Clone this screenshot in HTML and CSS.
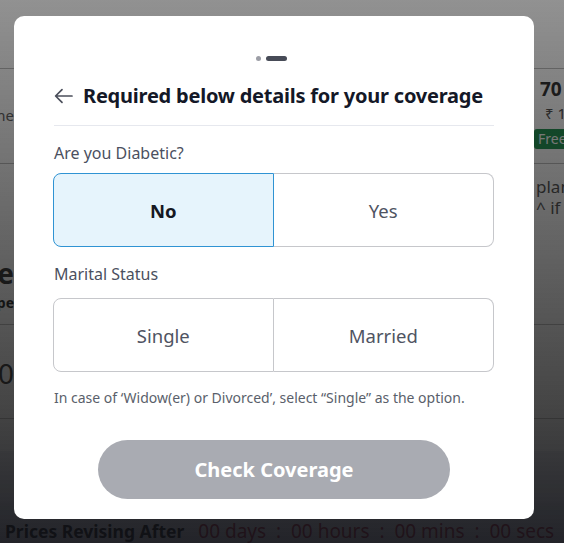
FILE: index.html
```html
<!DOCTYPE html>
<html lang="en">
<head>
<meta charset="utf-8">
<title>Required details</title>
<link rel="stylesheet" href="styles.css">
</head>
<body>
<div class="page">
  <div class="sec sec-top"></div>
  <div class="sec sec-a">
    <div class="lcol"><span class="bg-muted bg-me">Name</span></div>
    <div class="mcol"></div>
    <div class="rcol">
      <span class="bg-price">70</span>
      <span class="bg-rupee">₹ 1</span>
      <span class="bg-free">Free</span>
    </div>
  </div>
  <div class="sec sec-b">
    <div class="lcol lcol-stack">
      <span class="bg-big">Insure</span>
      <span class="bg-small">Type</span>
    </div>
    <div class="mcol"></div>
    <div class="rcol rcol-text">
      <span>plans</span>
      <span>^ if c</span>
    </div>
  </div>
  <div class="sec sec-c">
    <div class="lcol"><span class="bg-big">₹10</span></div>
  </div>
  <div class="sec sec-d"></div>
  <div class="sec sec-band"></div>
  <div class="sec sec-bottom">
    <span class="bg-timer-label">Prices Revising After</span>
    <span class="bg-timer">00 days&nbsp; : &nbsp;00 hours&nbsp; : &nbsp;00 mins&nbsp; : &nbsp;00 secs</span>
  </div>
</div>
<div class="overlay"></div>

<div class="modal">
  <div class="steps">
    <span class="step-dot"></span>
    <span class="step-pill"></span>
  </div>
  <div class="head">
    <svg class="back" width="19" height="16" viewBox="0 0 19 16" aria-hidden="true">
      <path d="M18 8H1.8M8 1.6L1.6 8 8 14.4" fill="none" stroke="#4b4f5b" stroke-width="1.7" stroke-linecap="round" stroke-linejoin="round"/>
    </svg>
    <h1 class="title">Required below details for your coverage</h1>
  </div>
  <div class="q q-first">Are you Diabetic?</div>
  <div class="seg seg-first">
    <button class="opt opt-on">No</button>
    <button class="opt">Yes</button>
  </div>
  <div class="q q-second">Marital Status</div>
  <div class="seg">
    <button class="opt">Single</button>
    <button class="opt">Married</button>
  </div>
  <p class="note">In case of ‘Widow(er) or Divorced’, select “Single” as the option.</p>
  <button class="cta">Check Coverage</button>
</div>
</body>
</html>
```

FILE: styles.css
```css
* { box-sizing: border-box; }
html, body { margin: 0; padding: 0; }
body {
  font-family: "Noto Sans", "Open Sans", sans-serif;
  background: #ffffff;
  width: 564px;
  height: 543px;
  overflow: hidden;
}

/* background page */
.page {
  display: flex;
  flex-direction: column;
  height: 543px;
}
.sec { display: flex; border-bottom: 1px solid #b8b8b8; flex-shrink: 0; }
.sec-top { height: 69px; }
.sec-a { height: 95px; }
.sec-b { height: 161px; }
.sec-c { height: 94px; }
.sec-d { height: 32px; border-bottom: none; }
.sec-band { height: 52px; background: #e9eaf0; border-bottom: none; }
.sec-bottom {
  flex: 1;
  border-bottom: none;
  background: #e4e6ee;
  align-items: flex-end;
  padding: 0 0 0 5px;
  gap: 14px;
  white-space: nowrap;
  font-size: 17.5px;
  line-height: 24px;
  overflow: hidden;
}
.lcol {
  width: 14px;
  overflow: hidden;
  display: flex;
  justify-content: flex-end;
  white-space: nowrap;
  padding-top: 36px;
}
.lcol-stack { flex-direction: column; align-items: flex-end; justify-content: flex-start; padding-top: 91px; }
.sec-c .lcol { padding-top: 30px; }
.mcol { flex: 1; }
.rcol {
  width: 30px;
  overflow: hidden;
  white-space: nowrap;
  display: flex;
  flex-direction: column;
  padding-top: 8px;
}
.rcol-text { padding: 12px 0 0 2px; font-size: 17px; line-height: 21px; color: #444; }
.bg-muted { color: #555; font-size: 15px; }
.bg-price { font-weight: 700; font-size: 19px; color: #222; padding-left: 6px; line-height: 24px; }
.bg-rupee { font-size: 15px; color: #444; padding-left: 11px; line-height: 24px; }
.bg-free {
  margin-top: 4px;
  background: #0f8a43;
  color: #ffffff;
  font-size: 14px;
  line-height: 20px;
  padding-left: 4px;
  border-radius: 3px 0 0 3px;
}
.bg-big { font-size: 28px; font-weight: 700; color: #222; line-height: 36px; }
.bg-small { font-size: 14px; font-weight: 700; color: #111; margin-top: 2px; }
.sec-c .bg-big { font-weight: 400; }
.bg-timer-label { font-weight: 700; color: #000; }
.bg-timer { color: #a8102f; font-size: 19px; }

.overlay {
  position: fixed;
  inset: 0;
  background: linear-gradient(to bottom, rgba(22,22,22,0.47) 0%, rgba(22,22,22,0.8) 75%, rgba(18,19,24,0.92) 100%);
}

/* modal */
.modal {
  position: fixed;
  left: 14px;
  top: 16px;
  width: 520px;
  height: 503px;
  background: #ffffff;
  border-radius: 10px;
  padding: 40px 40px 0 40px;
  display: flex;
  flex-direction: column;
}
.steps {
  display: flex;
  justify-content: center;
  align-items: center;
  gap: 5px;
  height: 5px;
  margin-left: -6px;
}
.step-dot { width: 5px; height: 5px; border-radius: 50%; background: #9c9ea6; }
.step-pill { width: 21px; height: 5px; border-radius: 3px; background: #474b57; }

.head {
  display: flex;
  align-items: center;
  gap: 10px;
  margin-top: 21px;
  padding: 0 0 15px 0;
  border-bottom: 1px solid #e6e8ee;
}
.back { flex-shrink: 0; }
.title {
  margin: 0;
  font-size: 20px;
  line-height: 28px;
  font-weight: 700;
  color: #141827;
  letter-spacing: -0.22px;
}
.q {
  font-size: 16px;
  line-height: 20px;
  color: #4b5060;
}
.q-first { margin-top: 17px; }
.q-second { margin-top: 17px; }
.seg {
  display: grid;
  grid-template-columns: 1fr 1fr;
  height: 74px;
  margin-top: 14px;
  margin-left: -1px;
}
.seg-first { margin-top: 10px; }
.opt {
  font-family: inherit;
  font-size: 18.5px;
  color: #4f5462;
  background: #ffffff;
  border: 1px solid #c6c7cb;
  cursor: pointer;
  padding: 0;
}
.opt:first-child { border-radius: 8px 0 0 8px; }
.opt:last-child { border-radius: 0 8px 8px 0; border-left: none; }
.opt-on {
  background: #e6f4fc;
  border-color: #2f93d3;
  color: #151822;
  font-weight: 700;
}
.note {
  margin: 16px 0 0 0;
  font-size: 14px;
  line-height: 20px;
  color: #5a5f6b;
}
.cta {
  align-self: center;
  margin-top: 32px;
  width: 352px;
  height: 59px;
  border: none;
  border-radius: 30px;
  background: #a9abb2;
  color: #ffffff;
  font-family: inherit;
  font-size: 20px;
  font-weight: 700;
  cursor: pointer;
}
```
